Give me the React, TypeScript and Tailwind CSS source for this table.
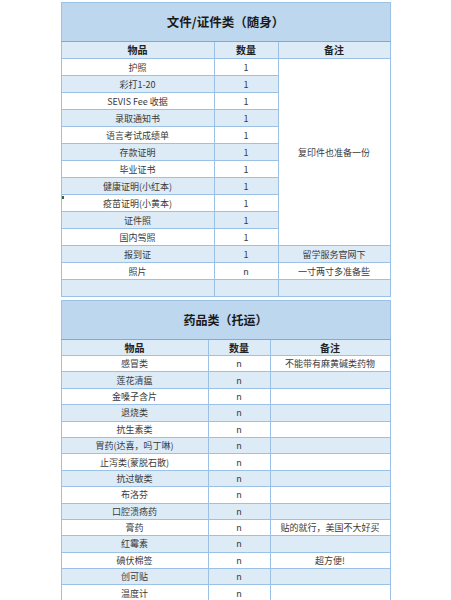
import React from "react";

const FONT = { fontFamily: '"Noto Sans CJK SC", "Noto Sans", sans-serif' };

type Row = { item: string; qty: string; note?: string };

const docs: Row[] = [
  { item: "护照", qty: "1" },
  { item: "彩打1-20", qty: "1" },
  { item: "SEVIS Fee 收据", qty: "1" },
  { item: "录取通知书", qty: "1" },
  { item: "语言考试成绩单", qty: "1" },
  { item: "存款证明", qty: "1" },
  { item: "毕业证书", qty: "1" },
  { item: "健康证明(小红本)", qty: "1" },
  { item: "疫苗证明(小黄本)", qty: "1" },
  { item: "证件照", qty: "1" },
  { item: "国内驾照", qty: "1" },
];

const meds: Row[] = [
  { item: "感冒类", qty: "n", note: "不能带有麻黄碱类药物" },
  { item: "莲花清瘟", qty: "n" },
  { item: "金嗓子含片", qty: "n" },
  { item: "退烧类", qty: "n" },
  { item: "抗生素类", qty: "n" },
  { item: "胃药(达喜，吗丁啉)", qty: "n" },
  { item: "止泻类(蒙脱石散)", qty: "n" },
  { item: "抗过敏类", qty: "n" },
  { item: "布洛芬", qty: "n" },
  { item: "口腔溃疡药", qty: "n" },
  { item: "膏药", qty: "n", note: "贴的就行，美国不大好买" },
  { item: "红霉素", qty: "n" },
  { item: "碘伏棉签", qty: "n", note: "超方便!" },
  { item: "创可贴", qty: "n" },
  { item: "温度计", qty: "n" },
];

const cell = "border border-[#9bc2e6] text-center align-middle p-0 leading-none";

export default function App() {
  return (
    <div className="w-[451px] h-[600px] bg-white overflow-hidden pt-[2px]" style={FONT}>
      <div className="w-[330px] mx-auto flex flex-col gap-[3px]">
        {/* Table 1 */}
        <table className="w-full border-collapse table-fixed text-[9px] text-[#3a3a3a]">
          <colgroup>
            <col className="w-[153px]" />
            <col className="w-[64px]" />
            <col />
          </colgroup>
          <thead>
            <tr className="h-[39px]">
              <th colSpan={3} className={`${cell} bg-[#bdd7ee] text-[12.5px] font-bold text-[#1a1a1a] border-b-[#7fa9d6]`}>
                文件/证件类（随身）
              </th>
            </tr>
            <tr className="h-[17px]">
              <th className={`${cell} bg-[#ddebf7] text-[10px] font-bold text-[#222]`}>物品</th>
              <th className={`${cell} bg-[#ddebf7] text-[10px] font-bold text-[#222]`}>数量</th>
              <th className={`${cell} bg-[#ddebf7] text-[10px] font-bold text-[#222]`}>备注</th>
            </tr>
          </thead>
          <tbody>
            {docs.map((r, i) => {
              const bg = i % 2 === 1 ? "bg-[#ddebf7]" : "bg-white";
              return (
                <tr key={r.item} className="h-[17px]">
                  <td className={`${cell} ${bg} relative`}>
                    {i === 8 && (
                      <span className="absolute left-[0px] top-[1px] w-[2px] h-[3px] bg-[#2e6b3a]" />
                    )}
                    {r.item}
                  </td>
                  <td className={`${cell} ${bg}`}>{r.qty}</td>
                  {i === 0 && (
                    <td rowSpan={docs.length} className={`${cell} bg-white`}>
                      复印件也准备一份
                    </td>
                  )}
                </tr>
              );
            })}
            <tr className="h-[17px]">
              <td className={`${cell} bg-[#ddebf7]`}>报到证</td>
              <td className={`${cell} bg-[#ddebf7]`}>1</td>
              <td className={`${cell} bg-[#ddebf7]`}>留学服务官网下</td>
            </tr>
            <tr className="h-[17px]">
              <td className={`${cell} bg-white`}>照片</td>
              <td className={`${cell} bg-white`}>n</td>
              <td className={`${cell} bg-white`}>一寸两寸多准备些</td>
            </tr>
            <tr className="h-[17px]">
              <td className={`${cell} bg-[#ddebf7]`}></td>
              <td className={`${cell} bg-[#ddebf7]`}></td>
              <td className={`${cell} bg-[#ddebf7]`}></td>
            </tr>
          </tbody>
        </table>

        {/* Table 2 */}
        <table className="w-full border-collapse table-fixed text-[9px] text-[#3a3a3a]">
          <colgroup>
            <col className="w-[147px]" />
            <col className="w-[62px]" />
            <col />
          </colgroup>
          <thead>
            <tr className="h-[39px]">
              <th colSpan={3} className={`${cell} bg-[#bdd7ee] text-[12px] font-bold text-[#1a1a1a] border-b-[#7fa9d6]`}>
                药品类（托运）
              </th>
            </tr>
            <tr className="h-[16px]">
              <th className={`${cell} bg-[#ddebf7] text-[10px] font-bold text-[#222]`}>物品</th>
              <th className={`${cell} bg-[#ddebf7] text-[10px] font-bold text-[#222]`}>数量</th>
              <th className={`${cell} bg-[#ddebf7] text-[10px] font-bold text-[#222]`}>备注</th>
            </tr>
          </thead>
          <tbody>
            {meds.map((r, i) => {
              const bg = i % 2 === 1 ? "bg-[#ddebf7]" : "bg-white";
              return (
                <tr key={r.item} className="h-[16.4px]">
                  <td className={`${cell} ${bg}`}>{r.item}</td>
                  <td className={`${cell} ${bg}`}>{r.qty}</td>
                  <td className={`${cell} ${bg}`}>{r.note ?? ""}</td>
                </tr>
              );
            })}
          </tbody>
        </table>
      </div>
    </div>
  );
}
